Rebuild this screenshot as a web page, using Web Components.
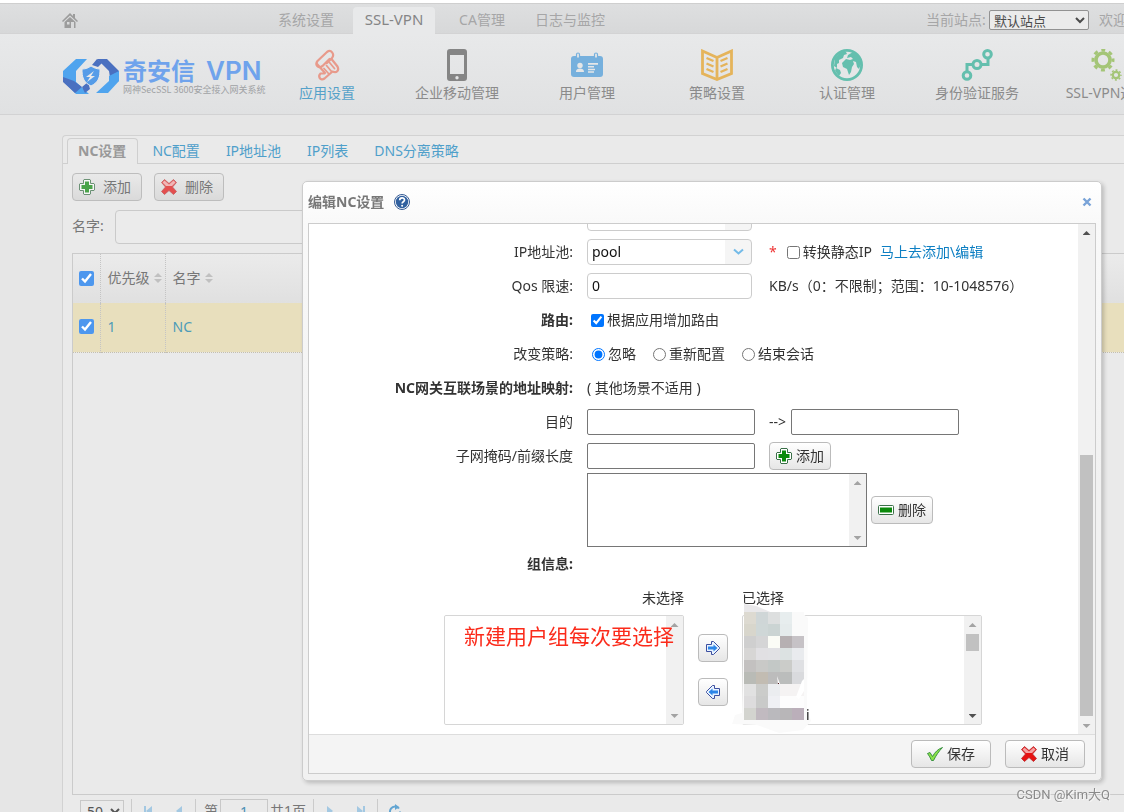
<!DOCTYPE html>
<html lang="zh-CN">
<head>
<meta charset="utf-8">
<title>奇安信 VPN</title>
<style>
  body { margin: 0; font: 14px/20px "Noto Sans", "Noto Sans CJK SC", sans-serif; background: #e6e6e6; color: #777; overflow: hidden; }
</style>
</head>
<body>
<vpn-app></vpn-app>

<script>
const define = (name, html, setup) => {
  const template = document.createElement('template');
  template.innerHTML = '<style>*{box-sizing:border-box}a{color:inherit;text-decoration:none}button,input,select,textarea{font:inherit;margin:0}</style>' + html;
  customElements.define(name, class extends HTMLElement {
    constructor() {
      super();
      this.attachShadow({ mode: 'open' }).append(template.content.cloneNode(true));
    }
    connectedCallback() { if (setup) setup(this, this.shadowRoot); }
  });
};

/* ---------- icons ---------- */
const ICONS = {
  home: `<svg viewBox="0 0 16 16"><path fill="#9c9c9c" d="M8 0 0 8l1 1 7-6.500L15 9l1-1-3-3V1h-2v2z"/><path fill="#9c9c9c" d="M8 4 2.500 9v6h11V9zM5 9h2.500v2.500H5zm4 0h3v6H9z" fill-rule="evenodd"/></svg>`,
  ticket: `<svg viewBox="0 0 32 32"><g fill="none" stroke="#e89a8b" stroke-width="2.200" stroke-linejoin="round" stroke-linecap="round"><path d="M16 14l5-5c3-4-1-9-5-6L6.500 12c-3 4 1 8 5 5l7-7"/><path d="M6 15l8 9M20.500 10l6 7.500c2 4-1 7-5 5l-8 7c-4 3-7-2-4-5h4"/><path d="m13 19.500 4.500 5m-2-8 5 6m-2-9 5 6" stroke-width="1.800"/></g></svg>`,
  phone: `<svg viewBox="0 0 32 32"><path fill="#858585" fill-rule="evenodd" d="M9 0h14a3 3 0 0 1 3 3v26a3 3 0 0 1-3 3H9a3 3 0 0 1-3-3V3a3 3 0 0 1 3-3zm0 6v19h14V6zm7 21a1.700 1.700 0 1 0 0 3.400 1.700 1.700 0 0 0 0-3.400z"/></svg>`,
  card: `<svg viewBox="0 0 32 32"><path fill="#76b0dd" d="M3 7h26a3 3 0 0 1 3 3v15a3 3 0 0 1-3 3H3a3 3 0 0 1-3-3V10a3 3 0 0 1 3-3z"/><path fill="#e5e6e7" stroke="#76b0dd" stroke-width="1.200" d="M5.500 5.500a1.500 1.500 0 0 1 3 0V9h-3zm18 0a1.500 1.500 0 0 1 3 0V9h-3z"/><g fill="#e5e6e7"><circle cx="9" cy="16.500" r="2.700"/><path d="M5 23c0-3 2-3 4-3.500 2 .500 4 .500 4 3.500zM17 14h10v1.700H17zm0 3h6v1.500h-6zm0 2.700h7v1.500h-7zm0 2.600h6v1.500h-6z"/></g></svg>`,
  book: `<svg viewBox="0 0 32 32"><g fill="none" stroke="#e5b45b" stroke-width="2.800"><path d="M1.500 2 16 8.500 30.500 2v22.500L16 30.500 1.500 24.500zM16 8v22"/><path d="m5.500 9 7 3m-7 2.500 7 3m-7 2.500 7 3M26.500 9l-7 3m7 2.500-7 3m7 2.500-7 3" stroke-width="2.400"/></g></svg>`,
  globe: `<svg viewBox="0 0 32 32"><circle cx="16" cy="16" r="14.600" fill="#e5e6e7" stroke="#64bfae" stroke-width="2.800"/><path fill="#64bfae" d="M4 9 10 3l5 0 1 2-3 1-1 3-4 2v3l-2 1v4l-3-2zM5 19l4 2 1 3-2 3-4-5zM17 6l5-3 6 5 2 7-2 5-2-2-1-5-3-1 1 3-2 3-1 5-2 3-2-6-4-2-1-4 4-4 4 1 3-1-2-2-4 1z"/></svg>`,
  nodes: `<svg viewBox="0 0 32 32"><g fill="none" stroke="#64bfae" stroke-width="3"><path d="M6 22v-6.500h6m9 0h6V9"/><circle cx="6" cy="26.500" r="3.800"/><circle cx="16" cy="15.500" r="4"/><circle cx="26.500" cy="5.300" r="3.800"/></g></svg>`,
  gears: `<svg viewBox="0 0 32 32"><g fill="none" stroke="#a4c577"><circle cx="12" cy="11" r="7" stroke-width="3.600"/><circle cx="12" cy="11" r="10" stroke-width="3" stroke-dasharray="3.927 3.927" stroke-dashoffset="2"/><circle cx="25" cy="26" r="3.200" stroke-width="2.200"/><circle cx="25" cy="26" r="4.900" stroke-width="1.600" stroke-dasharray="1.924 1.924" stroke-dashoffset="1"/></g></svg>`,
  add: `<svg viewBox="0 0 16 16"><path fill="#fff" stroke="#3a7048" stroke-width="1" d="M5 .5h6l.5.5v3.500H15l.5.5v6l-.5.5h-3.500V15l-.5.5H5l-.5-.5v-3.500H1l-.5-.5V5l.5-.5h3.500V1z"/><path fill="#0b8a0b" d="M6 2.500h4V6h3.500v4H10v3.500H6V10H2.500V6H6z"/></svg>`,
  minus: `<svg viewBox="0 0 16 16"><rect x=".5" y="3.500" width="15" height="9" rx="1" fill="#fff" stroke="#3a7048"/><path fill="#0b8a0b" d="M2 5.500h12v5H2z"/></svg>`,
  cross: `<svg viewBox="0 0 16 16"><path fill="#e61212" stroke="#b8282c" stroke-width=".8" stroke-linejoin="round" d="m3.500.5 4.500 4 4.500-4 3 3L11.500 8l4 4.500-3 3-4.500-4-4.500 4-3-3 4-4.500-4-4.500z"/><path fill="#f6a3a3" d="m3.500 1.500 4.500 4 4.500-4 2 2L11 7H5L1.500 3.500z"/></svg>`,
  tick: `<svg viewBox="0 0 16 16"><path fill="#8ce24a" stroke="#2c8a38" stroke-width=".9" stroke-linejoin="round" d="m.500 7.500 2.500-1 2.500 4C8 6 11 3 15.500 1.500 12 5 9 9.500 6.500 14.500H4.500C3.500 12 2 9.500.500 7.500z"/></svg>`,
  right: `<svg viewBox="0 0 16 16"><path fill="#e8f3ff" stroke="#3c4fa0" d="M1.500 4.500h5v-3h2l6 6v1l-6 6h-2v-3h-5z"/><path fill="#2d86e8" d="M3 6.500h5.500v-2L12.500 8l-4 3.500v-2H3z"/></svg>`,
  left: `<svg viewBox="0 0 16 16"><path fill="#e8f3ff" stroke="#3c4fa0" d="M14.500 4.500h-5v-3h-2l-6 6v1l6 6h2v-3h5z"/><path fill="#2d86e8" d="M13 6.500H7.500v-2L3.500 8l4 3.500v-2H13z"/></svg>`,
  help: `<svg viewBox="0 0 16 16"><circle cx="8" cy="8" r="7.500" fill="#fff" stroke="#365b94"/><circle cx="8" cy="8" r="6.200" fill="#30609f"/><path d="M5.700 6.300C5.700 3.200 10.500 3.200 10.500 6c0 1.700-2.400 1.700-2.400 3.500" fill="none" stroke="#fff" stroke-width="1.700"/><circle cx="8.100" cy="11.700" r="1" fill="#fff"/></svg>`,
  close: `<svg viewBox="0 0 16 16"><path d="m4.500 4.500 7 7m0-7-7 7" stroke="#79a3d8" stroke-width="2.400"/></svg>`,
  first: `<svg viewBox="0 0 16 16"><path fill="#a3c8e2" d="M4 3h2v10H4zm8 0v10L6 8z"/></svg>`,
  prev: `<svg viewBox="0 0 16 16"><path fill="#a3c8e2" d="M11 3v10L5 8z"/></svg>`,
  next: `<svg viewBox="0 0 16 16"><path fill="#a3c8e2" d="M5 3v10l6-5z"/></svg>`,
  last: `<svg viewBox="0 0 16 16"><path fill="#a3c8e2" d="M4 3v10l6-5zm6 0h2v10h-2z"/></svg>`,
  refresh: `<svg viewBox="0 0 16 16"><path fill="none" stroke="#62a5d2" stroke-width="2" d="M12 5.500a5 5 0 1 0 1 3"/><path fill="#62a5d2" d="M8 1v6l4-3z"/></svg>`,
  sort: `<svg viewBox="0 0 16 16"><path fill="#c0c0c0" d="M8 3 4 7h8zm0 10L4 9h8z"/></svg>`
};
define('ui-icon', `<style>:host{display:block;flex:none;width:var(--icon-size,16px);height:var(--icon-size,16px)}div,svg{display:block;width:100%;height:100%}</style><div></div>`,
  (host, root) => { root.querySelector('div').innerHTML = ICONS[host.getAttribute('name')] || ''; });

/* ---------- push button with icon ---------- */
define('tool-button', `<style>
  :host{display:block;flex:none}
  button{display:flex;align-items:center;justify-content:center;gap:var(--btn-gap,4px);height:28px;padding:var(--btn-pad,0 6px);
    border:1px solid var(--btn-line,#bbb);border-radius:4px;background:var(--btn-fill,linear-gradient(#fff,#e6e6e6));color:inherit;white-space:nowrap;line-height:20px}
  :host([title]) button{width:30px;padding:0;gap:0}
  ui-icon{opacity:var(--icon-fade,1)}
</style><button type="button"><span class="slot"></span><slot></slot></button>`,
  (host, root) => {
    const icon = document.createElement('ui-icon');
    icon.setAttribute('name', host.getAttribute('icon'));
    root.querySelector('.slot').replaceWith(icon);
    if (host.title) root.querySelector('button').setAttribute('aria-label', host.title);
  });

/* ---------- scroll bar ---------- */
define('scroll-track', `<style>
  :host{display:flex;flex:none;flex-direction:column;align-items:center;width:17px;background:#f1f1f1;--up:#a3a3a3;--down:#a3a3a3}
  :host([up]){--up:#505050}:host([down]){--down:#505050}
  i{width:8px;height:4px;margin:7px 0 6px;flex:none}
  .up{background:var(--up);clip-path:polygon(50% 0,100% 100%,0 100%)}
  .down{background:var(--down);clip-path:polygon(0 0,100% 0,50% 100%)}
  .lane{flex:1;align-self:stretch;display:flex;flex-direction:column;padding:0 2px}
  .before{flex:var(--before,0)}.thumb{flex:var(--thumb,0);background:#c1c1c1}.after{flex:var(--after,1)}
</style><i class="up"></i><div class="lane"><div class="before"></div><div class="thumb"></div><div class="after"></div></div><i class="down"></i>`);

/* ---------- top bar ---------- */
define('top-bar', `<style>
  :host{display:flex;height:31px;padding-left:62px;border-top:1px solid #cfcfcf;border-bottom:1px solid #d3d3d4;background:linear-gradient(#dedfe0,#d7d8d9);color:#a6a6a7}
  .home{width:200px;padding-top:9px}
  nav{display:flex;align-items:flex-end}
  nav a{width:88px;height:27px;text-align:center;line-height:27px;white-space:nowrap}
  nav a.on{width:82px;margin:0 3px -1px;background:#e8e9ea;border-radius:4px 4px 0 0;color:#858586;font-size:15px;line-height:25px}
  .site{width:198px;margin-left:auto;display:flex;align-items:center;white-space:nowrap;overflow:hidden;gap:4px;padding-top:2px}
  select{width:100px;height:20px;border:1px solid #929292;border-radius:2px;background:#ebebeb;color:#4b4b4b;padding:0;line-height:18px;font-size:13px;flex:none}
  .hello{margin-left:6px}
  label{flex:none;width:59px}
</style>
<a class="home" href="#" aria-label="首页"><ui-icon name="home"></ui-icon></a>
<nav><a href="#">系统设置</a><a class="on" href="#">SSL-VPN</a><a href="#">CA管理</a><a href="#">日志与监控</a></nav>
<div class="site"><label for="site">当前站点:</label><select id="site"><option>默认站点</option></select><span class="hello">欢迎</span></div>`);

/* ---------- brand + modules ---------- */
define('brand-logo', `<style>
  :host{display:flex;align-items:center;width:200px;flex:none;gap:3px}
  svg{width:58px;height:36px;flex:none}
  .name{display:flex;align-items:center;height:27px;gap:11px;font-weight:700;color:#6fa3ec;line-height:26px;font-size:24px;white-space:nowrap}
  .vpn{font:600 26px/26px Inter,sans-serif}
  .sub{font:9px/11px "Noto Sans CJK SC",sans-serif;color:#a0a2a4;white-space:nowrap}
</style>
<svg viewBox="0 0 58 36"><path fill="#4fa4ee" d="M14 1h11L14 13v11l13 12H14L1 23V13z"/><path fill="#4a70c0" d="M1 19v5l12 11 7-6-8-6zM20 29l6-5 2 7-5 4zM30 7l5-6 5 4-4 4z"/><path fill="#4a70c0" d="M35 1h10l12 12v10l-8 3-2-13z"/><path fill="#4fa4ee" d="M47 18l10-5v10L46 35H34l13-12z"/><path fill="#559ce8" stroke="#e8e9ea" d="M29 8c3 2 6 3 9 3 0 8-1 13-9 17-8-4-9-9-9-17 4 0 6-1 9-3z"/><path fill="#e8e9ea" d="M32 13l-8 6h4l-3 5 8-6h-4z"/></svg>
<div><div class="name"><span>奇安信</span><span class="vpn">VPN</span></div><div class="sub">网神SecSSL 3600安全接入网关系统</div></div>`);

define('module-item', `<style>
  :host{display:block;width:130px;flex:none;--icon-size:32px}
  a{display:flex;flex-direction:column;align-items:center;gap:2px;white-space:nowrap}
</style><a href="#"><slot name="icon"></slot><slot></slot></a>`);

define('module-bar', `<style>
  :host{display:flex;height:81px;padding-left:62px;background:linear-gradient(#e8e9ea,#e0e1e2);border-bottom:1px solid #d2d2d3;color:#8b8b8b;overflow:hidden}
  nav{display:flex;padding-top:15px}
  brand-logo{height:84px}
  .on{color:#55a1c9}
</style>
<brand-logo></brand-logo>
<nav>
<module-item class="on"><ui-icon slot="icon" name="ticket"></ui-icon>应用设置</module-item>
<module-item><ui-icon slot="icon" name="phone"></ui-icon>企业移动管理</module-item>
<module-item><ui-icon slot="icon" name="card"></ui-icon>用户管理</module-item>
<module-item><ui-icon slot="icon" name="book"></ui-icon>策略设置</module-item>
<module-item><ui-icon slot="icon" name="globe"></ui-icon>认证管理</module-item>
<module-item><ui-icon slot="icon" name="nodes"></ui-icon>身份验证服务</module-item>
<module-item><ui-icon slot="icon" name="gears"></ui-icon>SSL-VPN选项</module-item>
</nav>`);

/* ---------- list panel ---------- */
define('panel-tabs', `<style>
  :host{display:flex;gap:2px;height:28px;padding:2px 0 0 4px;border-bottom:1px solid #cfcfcf;color:#4f9fca}
  a{padding:0 11px;line-height:24px;height:26px;white-space:nowrap;border:1px solid transparent;border-bottom:0}
  a.on{border-color:#cfcfcf;border-radius:4px 4px 0 0;background:#eaeaea;color:#999;font-weight:700;padding:0 11px 0 10px}
</style><a class="on" href="#">NC设置</a><a href="#">NC配置</a><a href="#">IP地址池</a><a href="#">IP列表</a><a href="#">DNS分离策略</a>`);

define('data-grid', `<style>
  :host{display:block;border:1px solid #cbcbcb;border-right:0;height:542px;color:#777}
  table{width:100%;border-collapse:collapse;table-layout:fixed}
  th,td{height:49px;padding:0 0 1px 7px;text-align:left;font-weight:400;border-right:1px dotted #c4c4c4;white-space:nowrap}
  thead tr{background:linear-gradient(#ebebeb,#e0e0e0)}
  tbody tr{background:#e8dfbd;border-bottom:1px dotted #c4bfae;color:#4c9bb8}
  th:last-child,td:last-child{border-right:0}
  th:first-child,td:first-child{padding-left:6px}
  span{display:flex;align-items:center}
  input{display:block;width:15px;height:15px;accent-color:#4d97ee}
  .c1{width:27px}.c2{width:65px}
  a{color:#4c9bb8}
</style><table><colgroup><col class="c1"><col class="c2"><col></colgroup>
<thead><tr><th><input type="checkbox" checked aria-label="全选"></th><th><span>优先级<ui-icon name="sort"></ui-icon></span></th><th><span>名字<ui-icon name="sort"></ui-icon></span></th></tr></thead>
<tbody><tr><td><input type="checkbox" checked aria-label="选择 NC"></td><td>1</td><td><a href="#">NC</a></td></tr></tbody></table>`);

define('page-bar', `<style>
  :host{display:flex;align-items:center;height:24px;margin-top:4px;padding-left:8px;white-space:nowrap}
  select{width:44px;height:22px;border:1px solid #c8c8c8;background:#eaeaea;color:#555;padding:0 0 0 2px}
  hr{width:1px;height:24px;border:0;margin:0;background:#cbcbcb}
  .first{margin-left:7px}
  .pair{display:flex;width:63px;justify-content:space-around}
  .page{display:flex;width:117px;padding-left:8px;gap:2px}
  .page input{width:48px;height:24px;border:1px solid #c8c8c8;background:#eaeaea;text-align:center;color:#4c8fb5;padding:0}
  .page label,.page span{line-height:24px}
  button{border:0;background:none;padding:0}
  .reload{margin-left:9px}
</style>
<select aria-label="每页条数"><option>50</option></select><hr class="first">
<div class="pair"><button aria-label="首页"><ui-icon name="first"></ui-icon></button><button aria-label="上一页"><ui-icon name="prev"></ui-icon></button></div><hr>
<div class="page"><label for="pg">第</label><input id="pg" value="1"><span>共1页</span></div><hr>
<div class="pair"><button aria-label="下一页"><ui-icon name="next"></ui-icon></button><button aria-label="末页"><ui-icon name="last"></ui-icon></button></div><hr>
<button class="reload" aria-label="刷新"><ui-icon name="refresh"></ui-icon></button>`);

define('nc-panel', `<style>
  :host{display:block;margin:20px 0 0 62px;border:1px solid #d2d2d2;border-right:0;border-radius:4px 0 0 0;background:#eaeaea}
  .body{padding:9px 0 20px 9px}
  .tools{display:flex;gap:12px;--btn-gap:8px;--btn-pad:0 10px 0 6px;--btn-line:#bdbdbd;--btn-fill:linear-gradient(#e9e9e9,#dadada);--icon-fade:.7}
  .search{display:flex;align-items:center;margin:9px 0}
  .search label{width:43px;line-height:18px;padding-bottom:2px}
  .search input{width:240px;height:34px;border:1px solid #cacaca;border-radius:4px;background:#ebebeb}
</style><panel-tabs></panel-tabs><div class="body">
<div class="tools"><tool-button icon="add">添加</tool-button><tool-button icon="cross">删除</tool-button></div>
<div class="search"><label for="q">名字:</label><input id="q" type="text"></div>
<data-grid></data-grid><page-bar></page-bar></div>`);

/* ---------- dialog ---------- */
define('form-row', `<style>
  :host{display:grid;grid-template-columns:264px 1fr;column-gap:14px;align-items:center;min-height:34px;flex:none}
  .label{text-align:right;white-space:nowrap}
  :host([strong]) .label{font-weight:700}
  .field{display:flex;align-items:center;white-space:nowrap}
</style><div class="label"><slot name="label"></slot></div><div class="field"><slot></slot></div>`);

define('combo-box', `<style>
  :host{display:block;position:relative;width:165px;flex:none}
  select{appearance:none;display:block;width:165px;height:26px;padding:0 28px 0 4px;border:1px solid #ccc;border-radius:4px;background:linear-gradient(#f5f5f5,#f5f5f5) right/26px 100% no-repeat #fff;color:#111;line-height:24px}
  svg{position:absolute;right:8px;top:9px;width:11px;height:8px;pointer-events:none}
</style><select><option></option></select><svg viewBox="0 0 11 8"><path d="m1 1.500 4.500 4 4.500-4" fill="none" stroke="#74bbe8" stroke-width="2"/></svg>`,
  (host, root) => {
    root.querySelector('option').textContent = host.getAttribute('value') || '';
    root.querySelector('select').setAttribute('aria-label', host.getAttribute('label'));
  });

define('list-box', `<style>
  :host{display:flex;width:240px;height:110px;border:1px solid #d6d6d6;border-radius:2px;background:#fff}
  select{flex:1;min-width:0;border:0;padding:0;outline:0;background:#fff;overflow:hidden}
</style><select multiple></select><slot></slot>`,
  (host, root) => root.querySelector('select').setAttribute('aria-label', host.getAttribute('label')));

define('pixel-mask', `<style>:host{display:block;width:80px;height:132px}svg{display:block}</style>
<svg width="80" height="132" viewBox="732 601 80 132"><path fill="#fafafa" d="M744 604l14 2 17 9 26-3 7 6-1 90 4 13-8 9-24 3-22-8-25-1 3-9 7-2 1-50 2-45z"/><path fill="#e9e8ea" d="M744 604l12 2 19 8-2 2h-29z"/><g></g><path fill="#fff" d="M777 676l3 8h-2zM802 681l2-2v12l-5 8-3-2z"/><path fill="#501018" d="M778 683h1v1h-1z"/></svg>`,
  (host, root) => {
    const rows = [
      'dddad1 cfd6d7 dddfdf e7edee fafafa', 'd8d6cc cfd7d7 cbd4d3 e5ebec fafafa', 'cfcfcf d5d5d6 fbfcf6 b6b0b2 c6c2c6',
      'd7d6d5 e1e0e3 e1e1e4 dce2e2 e9ebee', 'c3c1c0 c9c9c7 c3c8c6 cbccc9 dfe0e3', 'b9bbb6 c2bcb2 bcbcbc bbbdbc d9dadd',
      'e1e1e1 cbccca ebedf0 f5f3f3 f5f3f3', 'dddcdd c9cac9 eff0f4 fdfdfd fdfdfd', 'd3d4cf c1bac0 bab9bd b8b6b8 bbafba'];
    root.querySelector('g').innerHTML = rows.map((r, y) => r.split(' ').map((c, x) =>
      `<rect x="${744 + x * 12}" y="${612 + y * 12}" width="12" height="12" fill="#${c}"/>`).join('')).join('');
  });

define('transfer-list', `<style>
  :host{display:grid;grid-template-columns:240px 30px 240px;column-gap:14px;padding-left:135px;flex:none}
  .cap{line-height:34px;height:34px}
  .from{text-align:right}
  .mid{display:flex;flex-direction:column;justify-content:center;gap:16px}
  .cell{position:relative}
  .note{position:absolute;left:20px;top:6px;font-size:21px;line-height:30px;color:#fb2b1b;white-space:nowrap}
  pixel-mask{position:absolute;left:-10px;top:-14px}
  .tail{position:absolute;left:64px;bottom:0;color:#222}
  .full{--before:1;--thumb:17;--after:58}
</style>
<div class="cap from">未选择</div><div class="cap"></div><div class="cap">已选择</div>
<div class="cell"><list-box label="未选择"><scroll-track></scroll-track></list-box><div class="note">新建用户组每次要选择</div></div>
<div class="mid"><tool-button icon="right" title="选择"></tool-button><tool-button icon="left" title="移除"></tool-button></div>
<div class="cell"><list-box label="已选择"><scroll-track class="full" down></scroll-track></list-box><pixel-mask></pixel-mask><span class="tail">i</span></div>`);

define('edit-dialog', `<style>
  :host{display:flex;flex-direction:column;padding:0 5px 6px;border:1px solid #ccc;border-radius:5px;background:linear-gradient(#fff,#f9f9f9 42px,#f1f1f1 300px);box-shadow:2px 2px 4px rgba(0,0,0,.2);color:#333}
  header{display:flex;align-items:center;height:41px;padding-bottom:2px;gap:10px;font-weight:700;color:#777}
  header button{margin-left:auto;margin-right:1px;border:0;background:none;padding:0}
  .frame{border:1px solid #ccc}
  .view{display:flex;height:510px;overflow:hidden;background:#fff}
  form{flex:1;min-width:0;display:flex;flex-direction:column;justify-content:flex-end;padding-bottom:9px}
  .view>scroll-track{--before:214;--thumb:262;--after:1}
  .plain{width:168px;height:26px;border:1px solid #767676;border-radius:2px;padding:0 4px}
  .round{width:165px;height:26px;border:1px solid #ccc;border-radius:4px;padding:0 4px 2px;color:#111}
  .gap{margin-left:14px}.wide{margin-left:17px}
  .arrow{width:22px}
  .req{color:#e33;margin-right:6px}
  input[type=checkbox]{width:13px;height:13px;margin:0 3px 0 4px;accent-color:#0075ff}
  input[type=radio]{width:13px;height:13px;margin:0 3px 0 5px;accent-color:#0075ff}
  .check{display:flex;align-items:center}
  .check+.check{margin-left:12px}
  .link{color:#0d7fc3;margin-left:8px}
  .area{display:flex;width:280px;height:74px;border:1px solid #767676;background:#fff;margin-right:4px}
  textarea{flex:1;min-width:0;border:0;resize:none;padding:2px;outline:0;background:none;overflow:hidden}
  footer{display:flex;align-items:center;justify-content:flex-end;gap:14px;height:39px;padding-right:10px;border-top:1px solid #ddd;background:#f4f4f4;--btn-pad:0 15px}
</style>
<header>编辑NC设置<ui-icon name="help"></ui-icon><button aria-label="关闭"><ui-icon name="close"></ui-icon></button></header>
<div class="frame"><div class="view"><form>
<form-row><combo-box label="地址类型"></combo-box></form-row>
<form-row><span slot="label">IP地址池:</span><combo-box label="IP地址池" value="pool"></combo-box><span class="req wide">*</span><label class="check"><input type="checkbox">转换静态IP</label><a class="link" href="#">马上去添加\\编辑</a></form-row>
<form-row><label slot="label" for="qos">Qos 限速:</label><input class="round" id="qos" value="0"><span class="wide">KB/s（0：不限制；范围：10-1048576）</span></form-row>
<form-row strong><span slot="label">路由:</span><label class="check"><input type="checkbox" checked>根据应用增加路由</label></form-row>
<form-row><span slot="label">改变策略:</span><label class="check"><input type="radio" name="p" checked>忽略</label><label class="check"><input type="radio" name="p">重新配置</label><label class="check"><input type="radio" name="p">结束会话</label></form-row>
<form-row strong><span slot="label">NC网关互联场景的地址映射:</span><span>( 其他场景不适用 )</span></form-row>
<form-row><label slot="label" for="dst">目的</label><input class="plain" id="dst"><label class="gap arrow" for="dst2">--&gt;</label><input class="plain" id="dst2"></form-row>
<form-row><label slot="label" for="mask">子网掩码/前缀长度</label><input class="plain" id="mask"><tool-button class="gap" icon="add">添加</tool-button></form-row>
<form-row><div class="area"><textarea aria-label="地址映射"></textarea><scroll-track></scroll-track></div><tool-button icon="minus">删除</tool-button></form-row>
<form-row strong><span slot="label">组信息:</span></form-row>
<transfer-list></transfer-list>
</form><scroll-track up></scroll-track></div>
<footer><tool-button icon="tick">保存</tool-button><tool-button icon="cross">取消</tool-button></footer></div>`);

/* ---------- application shell ---------- */
define('vpn-app', `<style>
  :host{display:block;height:100vh;overflow:hidden;border-top:3px solid #fff;box-sizing:border-box}
  .overlay{position:fixed;inset:0;padding:181px 22px 0 302px}
  .mark{position:fixed;right:14px;bottom:7px;font-family:Roboto,"Noto Sans CJK SC",sans-serif;font-size:13px;color:#8a8a8a;text-shadow:1px 1px 0 #f6f6f6}
</style><top-bar></top-bar><module-bar></module-bar><nc-panel></nc-panel>
<div class="overlay"><edit-dialog></edit-dialog></div><div class="mark">CSDN @Kim大Q</div>`);
</script>
</body>
</html>
